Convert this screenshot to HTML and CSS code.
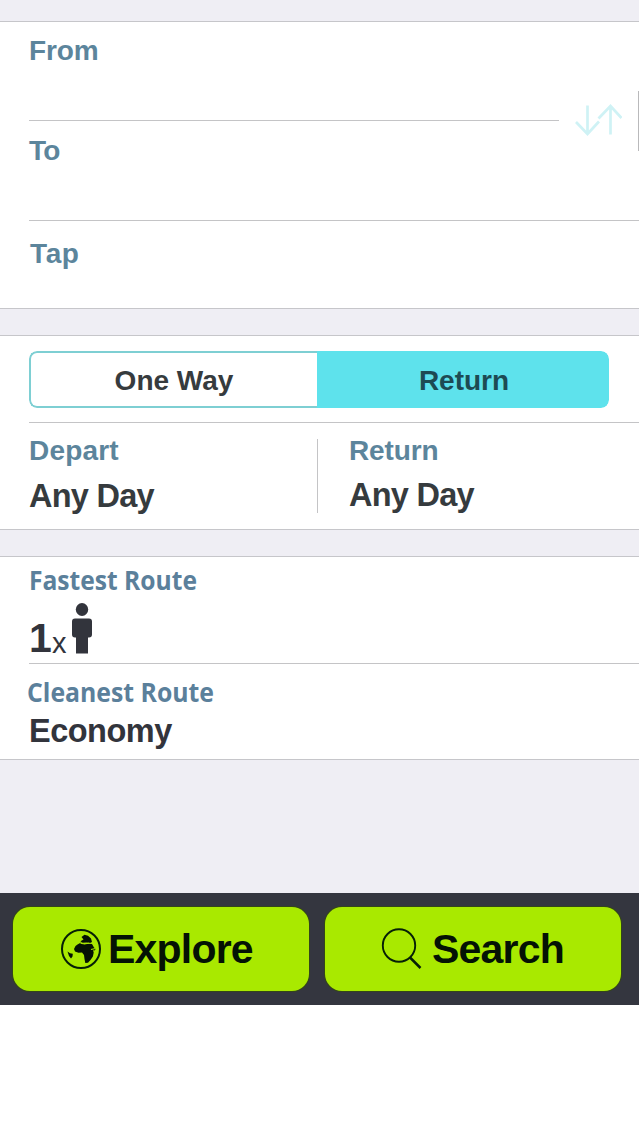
FILE: index.html
```html
<!DOCTYPE html>
<html lang="en">
<head>
<meta charset="utf-8">
<title>Travel search</title>
<link rel="stylesheet" href="styles.css">
</head>
<body>
<main class="screen">
  <section class="panel places">
    <div class="row row-from">
      <div class="field from-field"><span class="label">From</span></div>
      <svg class="swap" width="48" height="34" viewBox="0 0 48 34" fill="none" stroke="#cff2f5" stroke-width="2.7">
        <path d="M13.500 1.500v29M2 18l11.500 12L25 17.500"/>
        <path d="M36.500 30.500V1.500M24.500 14.500L36.500 2l11 12"/>
      </svg>
      <span class="edge"></span>
    </div>
    <div class="field to-field"><span class="label to">To</span></div>
    <div class="field tap-field"><span class="label tap">Tap</span></div>
  </section>

  <section class="panel trip">
    <div class="segmented">
      <div class="segment">One Way</div>
      <div class="segment selected">Return</div>
    </div>
    <div class="dates">
      <div class="date depart">
        <span class="label depart-label">Depart</span>
        <span class="value">Any Day</span>
      </div>
      <div class="date return">
        <span class="label">Return</span>
        <span class="value">Any Day</span>
      </div>
    </div>
  </section>

  <section class="panel routes">
    <div class="fastest">
      <svg class="route-label" width="180" height="40"><text x="0" y="25" textLength="168" lengthAdjust="spacingAndGlyphs">Fastest Route</text></svg>
      <div class="passengers">
        <span class="count">1</span><span class="times">x</span>
        <svg class="person" width="20" height="51" viewBox="0 0 20 51" fill="#32343c">
          <ellipse cx="10" cy="6.500" rx="6.200" ry="6.500"/>
          <path d="M3 15.500h14q3 0 3 3v13q0 3-3 3h-1V50.500H4V34.500H3q-3 0-3-3v-13q0-3 3-3z"/>
        </svg>
      </div>
    </div>
    <div class="cleanest">
      <svg class="route-label clean-label" width="200" height="40"><text x="0" y="25" textLength="187" lengthAdjust="spacingAndGlyphs">Cleanest Route</text></svg>
      <span class="value economy">Economy</span>
    </div>
  </section>

  <nav class="actions">
    <div class="button explore">
      <svg width="42" height="42" viewBox="0 0 42 42">
        <circle cx="21" cy="21" r="19" fill="none" stroke="#062006" stroke-width="2"/>
        <path fill="#041204" d="M21.500 9l3-2.200 3.500 1 3 2.700 1 3.500-2 1-3.500-.5-4 .2-2-1.500 3-1.700zM17.500 16.500l3.500-2 3 1.500 4-.2 4 .2 2 3.500 1.700 1.500-1.200 1.500-1.500-.2.700 2.200-.8 4-2.400 3.500-2.500 2.700-2.700.3-.8-4-.5-4-2-2.500-3.500.3-3.500-1.300-1-2.500 1.500-3z"/>
        <path fill="#041204" d="M7.500 23.500l2.500 1.700 2.800.6-.3 2.700-1.500 2-2-2.500z"/>
        <path d="M20.500 15.200l4 .8 5-1M31 21.500l4.500-1" fill="none" stroke="#a9e900" stroke-width="1.200"/>
      </svg>
      <span>Explore</span>
    </div>
    <div class="button search">
      <svg width="42" height="44" viewBox="0 0 42 44" fill="none" stroke="#062006">
        <circle cx="18" cy="18.500" r="16.200" stroke-width="1.900"/>
        <path d="M29 30.500L39.500 41" stroke-width="2.500"/>
      </svg>
      <span>Search</span>
    </div>
  </nav>
</main>
</body>
</html>
```

FILE: styles.css
```css
* { box-sizing: border-box; }
body {
  margin: 0;
  background: #fff;
  font-family: "Liberation Sans", Arial, sans-serif;
  font-weight: 700;
}
.screen {
  width: 639px;
  height: 1005px;
  padding-top: 21px;
  background: #efeef4;
  display: flex;
  flex-direction: column;
}
.panel {
  background: #fff;
  border-top: 1px solid #c6c6ca;
  border-bottom: 1px solid #c6c6ca;
  flex: none;
}
.label {
  display: block;
  font-size: 28px;
  line-height: 32px;
  letter-spacing: -0.100px;
  color: #5c859c;
}
.label.to { letter-spacing: -0.800px; }
.label.tap { letter-spacing: 0.600px; }
.label.depart-label { letter-spacing: 0.200px; }
.value {
  display: block;
  font-size: 32.500px;
  line-height: 36px;
  letter-spacing: -0.750px;
  color: #363b3e;
}

.places { height: 288px; }
.row-from { display: flex; height: 99px; }
.field { border-bottom: 1px solid #c4c4c6; margin-left: 29px; }
.from-field { width: 530px; padding-top: 13px; }
.swap { margin: 82px 0 -17px 15px; flex: none; }
.edge {
  width: 1px;
  height: 60px;
  margin: 69px 0 0 auto;
  background: #b9b9bb;
}
.to-field { height: 100px; padding-top: 14px; }
.tap-field { height: 86px; padding: 17px 0 0 1px; border-bottom: 0; }

.trip { height: 195px; margin-top: 26px; }
.segmented {
  display: flex;
  width: 580px;
  height: 57px;
  margin: 15px 0 14px 29px;
  border-radius: 8px;
  overflow: hidden;
}
.segment {
  width: 288px;
  border: 2px solid #7ecfd3;
  border-right: 0;
  border-radius: 8px 0 0 8px;
  font-size: 28px;
  line-height: 55px;
  text-align: center;
  color: #363b3e;
}
.segment.selected {
  width: 292px;
  border: 0;
  border-radius: 0 8px 8px 0;
  background: #5ee2ec;
  color: #1d4b53;
  line-height: 59px;
  padding-left: 2px;
}
.dates {
  display: flex;
  margin-left: 29px;
  height: 107px;
  padding-top: 16px;
  border-top: 1px solid #c4c4c6;
}
.date { height: 74px; }
.date .label { margin-top: -4px; }
.date .value { margin-top: 11px; }
.date.depart { width: 289px; border-right: 1px solid #c4c4c6; }
.date.return { padding-left: 31px; }
.date.return .value { margin-top: 10px; }

.routes { height: 204px; margin-top: 26px; }
.route-label {
  display: block;
  overflow: visible;
  font-family: "Open Sans", "Noto Sans", sans-serif;
  font-size: 27.500px;
  font-weight: 700;
  fill: #5b809b;
}
.fastest {
  height: 107px;
  margin-left: 29px;
  padding-top: 8px;
  border-bottom: 1px solid #c4c4c6;
}
.passengers {
  display: flex;
  height: 51px;
  margin-top: -2px;
  color: #32343c;
}
.count { width: 23px; font-size: 41px; line-height: 46px; margin-top: 12px; }
.times { width: 20px; font-size: 29px; font-weight: 400; line-height: 32px; margin-top: 24px; }
.cleanest { padding: 13px 0 0 29px; }
.clean-label { margin-left: -2px; }
.economy { margin-top: -4px; color: #32343c; letter-spacing: -0.500px; }

.actions {
  display: flex;
  gap: 16px;
  height: 112px;
  margin-top: auto;
  padding: 14px 13px;
  background: #34363f;
  flex: none;
}
.button {
  display: flex;
  width: 296px;
  height: 84px;
  border-radius: 17px;
  background: #a9e900;
  box-shadow: 0 0 0 1px #344619;
  color: #041204;
  font-size: 41px;
  line-height: 84px;
  letter-spacing: -0.800px;
}
.button svg { flex: none; }
.explore svg { margin: 21px 6px 0 47px; }
.search svg { margin: 20px 9px 0 56px; }
```
